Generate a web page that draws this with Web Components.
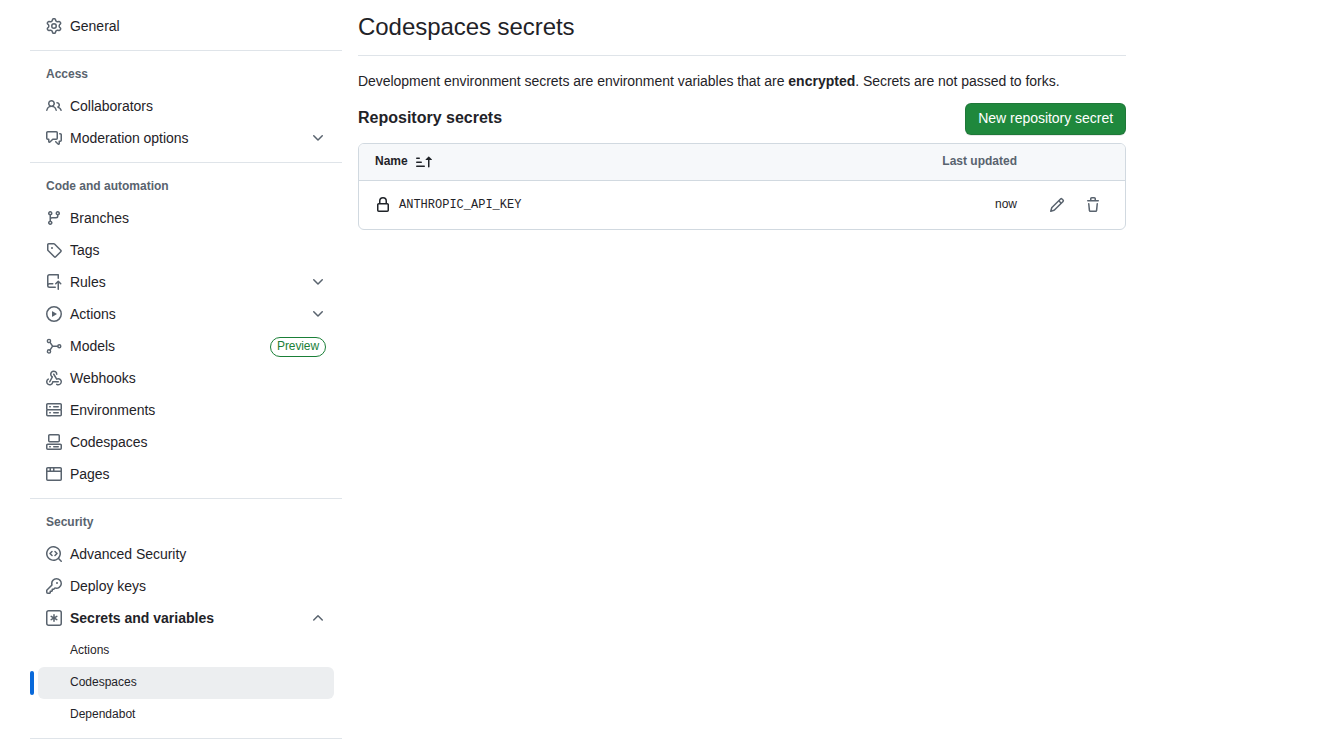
<!DOCTYPE html>
<html lang="en">
<head>
<meta charset="utf-8">
<title>Codespaces secrets</title>
<style>
  html, body { margin: 0; height: 750px; overflow: hidden; background: #fff; }
  body { font-family: "Liberation Sans", Arial, sans-serif; font-size: 14px; color: #1f2328; }
</style>
</head>
<body>
<settings-page>
  <settings-nav slot="nav">
    <nav-item icon="gear">General</nav-item>
    <nav-divider></nav-divider>
    <nav-heading>Access</nav-heading>
    <nav-item icon="people">Collaborators</nav-item>
    <nav-item icon="comment" chevron="down">Moderation options</nav-item>
    <nav-divider></nav-divider>
    <nav-heading>Code and automation</nav-heading>
    <nav-item icon="branch">Branches</nav-item>
    <nav-item icon="tag">Tags</nav-item>
    <nav-item icon="repopush" chevron="down">Rules</nav-item>
    <nav-item icon="play" chevron="down">Actions</nav-item>
    <nav-item icon="model" badge="Preview">Models</nav-item>
    <nav-item icon="webhook">Webhooks</nav-item>
    <nav-item icon="server">Environments</nav-item>
    <nav-item icon="codespaces">Codespaces</nav-item>
    <nav-item icon="browser">Pages</nav-item>
    <nav-divider></nav-divider>
    <nav-heading>Security</nav-heading>
    <nav-item icon="codescan">Advanced Security</nav-item>
    <nav-item icon="key">Deploy keys</nav-item>
    <nav-item icon="asterisk" chevron="up" strong>Secrets and variables</nav-item>
    <nav-item sub>Actions</nav-item>
    <nav-item sub current>Codespaces</nav-item>
    <nav-item sub>Dependabot</nav-item>
    <nav-divider></nav-divider>
  </settings-nav>
  <secrets-panel slot="main"></secrets-panel>
</settings-page>

<script>
const ICONS = {
  gear: 'M8 0a8.2 8.2 0 0 1 .701.031C9.444.095 9.99.645 10.16 1.29l.288 1.107c.018.066.079.158.212.224.231.114.454.243.668.386.123.082.233.09.299.071l1.103-.303c.644-.176 1.392.021 1.82.63.27.385.506.792.704 1.218.315.675.111 1.422-.364 1.891l-.814.806c-.049.048-.098.147-.088.294.016.257.016.515 0 .772-.01.147.038.246.088.294l.814.806c.475.469.679 1.216.364 1.891a7.977 7.977 0 0 1-.704 1.217c-.428.61-1.176.807-1.82.63l-1.102-.302c-.067-.019-.177-.011-.3.071a5.909 5.909 0 0 1-.668.386c-.133.066-.194.158-.211.224l-.29 1.106c-.168.646-.715 1.196-1.458 1.26a8.006 8.006 0 0 1-1.402 0c-.743-.064-1.289-.614-1.458-1.26l-.289-1.106c-.018-.066-.079-.158-.212-.224a5.738 5.738 0 0 1-.668-.386c-.123-.082-.233-.09-.299-.071l-1.103.303c-.644.176-1.392-.021-1.82-.63a8.12 8.12 0 0 1-.704-1.218c-.315-.675-.111-1.422.363-1.891l.815-.806c.05-.048.098-.147.088-.294a6.214 6.214 0 0 1 0-.772c.01-.147-.038-.246-.088-.294l-.815-.806C.635 6.045.431 5.298.746 4.623a7.92 7.92 0 0 1 .704-1.217c.428-.61 1.176-.807 1.82-.63l1.102.302c.067.019.177.011.3-.071.214-.143.437-.272.668-.386.133-.066.194-.158.211-.224l.29-1.106C6.009.645 6.556.095 7.299.03 7.53.01 7.764 0 8 0Zm-.571 1.525c-.036.003-.108.036-.137.146l-.289 1.105c-.147.561-.549.967-.998 1.189-.173.086-.34.183-.5.29-.417.278-.97.423-1.529.27l-1.103-.303c-.109-.03-.175.016-.195.045-.22.312-.412.644-.573.99-.014.031-.021.11.059.19l.815.806c.411.406.562.957.53 1.456a4.709 4.709 0 0 0 0 .582c.032.499-.119 1.05-.53 1.456l-.815.806c-.081.08-.073.159-.059.19.162.346.353.677.573.989.02.03.085.076.195.046l1.102-.303c.56-.153 1.113-.008 1.53.27.161.107.328.204.501.29.447.222.85.629.997 1.189l.289 1.105c.029.109.101.143.137.146a6.6 6.6 0 0 0 1.142 0c.036-.003.108-.036.137-.146l.289-1.105c.147-.561.549-.967.998-1.189.173-.086.34-.183.5-.29.417-.278.97-.423 1.529-.27l1.103.303c.109.029.175-.016.195-.045.22-.313.411-.644.573-.99.014-.031.021-.11-.059-.19l-.815-.806c-.411-.406-.562-.957-.53-1.456a4.709 4.709 0 0 0 0-.582c-.032-.499.119-1.05.53-1.456l.815-.806c.081-.08.073-.159.059-.19a6.464 6.464 0 0 0-.573-.989c-.02-.03-.085-.076-.195-.046l-1.102.303c-.56.153-1.113.008-1.53-.27a4.44 4.44 0 0 0-.501-.29c-.447-.222-.85-.629-.997-1.189l-.289-1.105c-.029-.11-.101-.143-.137-.146a6.6 6.6 0 0 0-1.142 0ZM11 8a3 3 0 1 1-6 0 3 3 0 0 1 6 0ZM9.5 8a1.5 1.5 0 1 0-3.001.001A1.5 1.5 0 0 0 9.5 8Z',
  people: 'M2 5.5a3.5 3.5 0 1 1 5.898 2.549 5.508 5.508 0 0 1 3.034 4.084.75.75 0 1 1-1.482.235 4 4 0 0 0-7.9 0 .75.75 0 0 1-1.482-.236A5.507 5.507 0 0 1 3.102 8.05 3.493 3.493 0 0 1 2 5.5ZM11 4a3.001 3.001 0 0 1 2.22 5.018 5.01 5.01 0 0 1 2.56 3.012.749.749 0 0 1-.885.954.752.752 0 0 1-.549-.514 3.507 3.507 0 0 0-2.522-2.372.75.75 0 0 1-.574-.73v-.352a.75.75 0 0 1 .416-.672A1.5 1.5 0 0 0 11 5.5.75.75 0 0 1 11 4Zm-5.5-.5a2 2 0 1 0-.001 3.999A2 2 0 0 0 5.5 3.5Z',
  comment: 'M1.75 1h8.5c.966 0 1.75.784 1.75 1.75v5.5A1.75 1.75 0 0 1 10.25 10H7.061l-2.574 2.573A1.458 1.458 0 0 1 2 11.543V10h-.25A1.75 1.75 0 0 1 0 8.25v-5.5C0 1.784.784 1 1.75 1ZM1.5 2.75v5.5c0 .138.112.25.25.25h1a.75.75 0 0 1 .75.75v2.19l2.72-2.72a.749.749 0 0 1 .53-.22h3.5a.25.25 0 0 0 .25-.25v-5.5a.25.25 0 0 0-.25-.25h-8.5a.25.25 0 0 0-.25.25Zm13 2a.25.25 0 0 0-.25-.25h-.5a.75.75 0 0 1 0-1.5h.5c.966 0 1.75.784 1.75 1.75v5.5A1.75 1.75 0 0 1 14.25 12H14v1.543a1.458 1.458 0 0 1-2.487 1.03L9.22 12.28a.749.749 0 0 1 .326-1.275.749.749 0 0 1 .734.215l2.22 2.22v-2.19a.75.75 0 0 1 .75-.75h1a.25.25 0 0 0 .25-.25Z',
  branch: 'M9.5 3.25a2.25 2.25 0 1 1 3 2.122V6A2.5 2.5 0 0 1 10 8.5H6a1 1 0 0 0-1 1v1.128a2.251 2.251 0 1 1-1.5 0V5.372a2.25 2.25 0 1 1 1.5 0v1.836A2.493 2.493 0 0 1 6 7h4a1 1 0 0 0 1-1v-.628A2.25 2.25 0 0 1 9.5 3.25Zm-6 0a.75.75 0 1 0 1.5 0 .75.75 0 0 0-1.5 0Zm8.25-.75a.75.75 0 1 0 0 1.5.75.75 0 0 0 0-1.5ZM4.25 12a.75.75 0 1 0 0 1.5.75.75 0 0 0 0-1.5Z',
  tag: 'M1 7.775V2.75C1 1.784 1.784 1 2.75 1h5.025c.464 0 .91.184 1.238.513l6.25 6.25a1.75 1.75 0 0 1 0 2.474l-5.026 5.026a1.75 1.75 0 0 1-2.474 0l-6.25-6.25A1.752 1.752 0 0 1 1 7.775Zm1.5 0c0 .066.026.13.073.177l6.25 6.25a.25.25 0 0 0 .354 0l5.025-5.025a.25.25 0 0 0 0-.354l-6.25-6.25a.25.25 0 0 0-.177-.073H2.75a.25.25 0 0 0-.25.25ZM6 5a1 1 0 1 1 0 2 1 1 0 0 1 0-2Z',
  repopush: 'M1 2.5A2.5 2.5 0 0 1 3.5 0h8.75a.75.75 0 0 1 .75.75v3.5a.75.75 0 0 1-1.5 0V1.5h-8a1 1 0 0 0-1 1v6.708A2.493 2.493 0 0 1 3.5 9h3.25a.75.75 0 0 1 0 1.5H3.5a1 1 0 0 0 0 2h5.75a.75.75 0 0 1 0 1.5H3.5A2.5 2.5 0 0 1 1 11.5Zm13.23 7.79h-.001l-1.224-1.224v6.184a.75.75 0 0 1-1.5 0V9.066L10.28 10.29a.75.75 0 0 1-1.06-1.061l2.505-2.504a.75.75 0 0 1 1.06 0L15.29 9.23a.751.751 0 0 1-.018 1.042.751.751 0 0 1-1.042.018Z',
  play: 'M8 0a8 8 0 1 1 0 16A8 8 0 0 1 8 0ZM1.5 8a6.5 6.5 0 1 0 13 0 6.5 6.5 0 0 0-13 0Zm4.879-2.773 4.264 2.559a.25.25 0 0 1 0 .428l-4.264 2.559A.25.25 0 0 1 6 10.559V5.442a.25.25 0 0 1 .379-.215Z',
  webhook: 'M5.5 4.25a2.25 2.25 0 0 1 4.5 0 .75.75 0 0 0 1.5 0 3.75 3.75 0 1 0-6.14 2.889l-2.272 4.258a.75.75 0 0 0 1.324.706L7 7.25a.75.75 0 0 0-.309-1.015A2.25 2.25 0 0 1 5.5 4.25ZM7.364 3.607a.75.75 0 0 1 1.03.257l2.608 4.349a3.75 3.75 0 1 1-.628 6.785.75.75 0 0 1 .752-1.299 2.25 2.25 0 1 0-.033-3.88.75.75 0 0 1-1.03-.256L7.107 4.636a.75.75 0 0 1 .257-1.03ZM2.9 8.776A.75.75 0 0 1 2.625 9.8 2.25 2.25 0 1 0 6 11.75a.75.75 0 0 1 .75-.751h5.5a.75.75 0 0 1 0 1.5H7.425a3.751 3.751 0 1 1-5.55-3.998.75.75 0 0 1 1.024.274Z',
  server: 'M1.75 1h12.5c.966 0 1.75.784 1.75 1.75v4c0 .372-.116.717-.314 1 .198.283.314.628.314 1v4a1.75 1.75 0 0 1-1.75 1.75H1.75A1.75 1.75 0 0 1 0 12.75v-4c0-.358.109-.707.314-1a1.739 1.739 0 0 1-.314-1v-4C0 1.784.784 1 1.75 1ZM1.5 2.75v4c0 .138.112.25.25.25h12.5a.25.25 0 0 0 .25-.25v-4a.25.25 0 0 0-.25-.25H1.75a.25.25 0 0 0-.25.25Zm.25 5.75a.25.25 0 0 0-.25.25v4c0 .138.112.25.25.25h12.5a.25.25 0 0 0 .25-.25v-4a.25.25 0 0 0-.25-.25ZM7 4.75A.75.75 0 0 1 7.75 4h4.5a.75.75 0 0 1 0 1.5h-4.5A.75.75 0 0 1 7 4.75ZM7.75 10h4.5a.75.75 0 0 1 0 1.5h-4.5a.75.75 0 0 1 0-1.5ZM3 4.75A.75.75 0 0 1 3.75 4h.5a.75.75 0 0 1 0 1.5h-.5A.75.75 0 0 1 3 4.75ZM3.75 10h.5a.75.75 0 0 1 0 1.5h-.5a.75.75 0 0 1 0-1.5Z',
  codespaces: 'M0 11.25c0-.966.784-1.75 1.75-1.75h12.5c.966 0 1.75.784 1.75 1.75v3A1.75 1.75 0 0 1 14.25 16H1.75A1.75 1.75 0 0 1 0 14.25Zm2-9.5C2 .784 2.784 0 3.75 0h8.5C13.216 0 14 .784 14 1.75v5a1.75 1.75 0 0 1-1.75 1.75h-8.5A1.75 1.75 0 0 1 2 6.75Zm1.75-.25a.25.25 0 0 0-.25.25v5c0 .138.112.25.25.25h8.5a.25.25 0 0 0 .25-.25v-5a.25.25 0 0 0-.25-.25Zm-2 9.5a.25.25 0 0 0-.25.25v3c0 .138.112.25.25.25h12.5a.25.25 0 0 0 .25-.25v-3a.25.25 0 0 0-.25-.25ZM7 12.75a.75.75 0 0 1 .75-.75h4.5a.75.75 0 0 1 0 1.5h-4.5a.75.75 0 0 1-.75-.75Zm-4 0a.75.75 0 0 1 .75-.75h.5a.75.75 0 0 1 0 1.5h-.5a.75.75 0 0 1-.75-.75Z',
  browser: 'M0 2.75C0 1.784.784 1 1.75 1h12.5c.966 0 1.75.784 1.75 1.75v10.5A1.75 1.75 0 0 1 14.25 15H1.75A1.75 1.75 0 0 1 0 13.25ZM14.5 6h-13v7.25c0 .138.112.25.25.25h12.5a.25.25 0 0 0 .25-.25Zm-6-3.5v2h6v-1.75a.25.25 0 0 0-.25-.25ZM5 2.5v2h2v-2Zm-3.25 0a.25.25 0 0 0-.25.25V4.5h2v-2Z',
  codescan: 'M8.47 4.97a.75.75 0 0 0 0 1.06L9.94 7.5 8.47 8.97a.75.75 0 1 0 1.06 1.06l2-2a.75.75 0 0 0 0-1.06l-2-2a.75.75 0 0 0-1.06 0ZM6.53 6.03a.75.75 0 0 0-1.06-1.06l-2 2a.75.75 0 0 0 0 1.06l2 2a.75.75 0 1 0 1.06-1.06L5.06 7.5l1.47-1.47ZM12.246 13.307a7.501 7.501 0 1 1 1.06-1.06l2.474 2.473a.749.749 0 0 1-.326 1.275.749.749 0 0 1-.734-.215ZM1.5 7.5a6.002 6.002 0 0 0 3.608 5.504 6.002 6.002 0 0 0 6.486-1.117.748.748 0 0 1 .292-.293A6 6 0 1 0 1.5 7.5Z',
  key: 'M10.5 0a5.499 5.499 0 1 1-1.288 10.848l-.932.932a.749.749 0 0 1-.53.22H7v.75a.749.749 0 0 1-.22.53l-.5.5a.749.749 0 0 1-.53.22H5v.75a.749.749 0 0 1-.22.53l-.5.5a.749.749 0 0 1-.53.22h-2A1.75 1.75 0 0 1 0 14.25v-2c0-.199.079-.389.22-.53l4.932-4.932A5.5 5.5 0 0 1 10.5 0Zm-4 5.5c-.001.431.069.86.205 1.269a.75.75 0 0 1-.181.768L1.5 12.56v1.69c0 .138.112.25.25.25h1.69l.06-.06v-1.19a.75.75 0 0 1 .75-.75h1.19l.06-.06v-1.19a.75.75 0 0 1 .75-.75h1.19l1.023-1.025a.75.75 0 0 1 .768-.18A4 4 0 1 0 6.5 5.5ZM11 6a1 1 0 1 1 0-2 1 1 0 0 1 0 2Z',
  asterisk: 'M0 2.75A2.75 2.75 0 0 1 2.75 0h10.5A2.75 2.75 0 0 1 16 2.75v10.5A2.75 2.75 0 0 1 13.25 16H2.75A2.75 2.75 0 0 1 0 13.25ZM2.75 1.5c-.69 0-1.25.56-1.25 1.25v10.5c0 .69.56 1.25 1.25 1.25h10.5c.69 0 1.25-.56 1.25-1.25V2.75c0-.69-.56-1.25-1.25-1.25ZM8 4a.75.75 0 0 1 .75.75V6.7l1.69-.975a.75.75 0 0 1 .75 1.3L9.5 8l1.69.976a.75.75 0 0 1-.75 1.298L8.75 9.3v1.951a.75.75 0 0 1-1.5 0V9.299l-1.69.976a.75.75 0 0 1-.75-1.3L6.5 8l-1.69-.975a.75.75 0 0 1 .75-1.3l1.69.976V4.75A.75.75 0 0 1 8 4Z',
  down: 'M12.78 5.22a.749.749 0 0 1 0 1.06l-4.25 4.25a.749.749 0 0 1-1.06 0L3.22 6.28a.749.749 0 1 1 1.06-1.06L8 8.939l3.72-3.719a.749.749 0 0 1 1.06 0Z',
  up: 'M3.22 10.53a.749.749 0 0 1 0-1.06l4.25-4.25a.749.749 0 0 1 1.06 0l4.25 4.25a.749.749 0 1 1-1.06 1.06L8 6.811 4.28 10.53a.749.749 0 0 1-1.06 0Z',
  lock: 'M4 4a4 4 0 0 1 8 0v2h.25c.966 0 1.75.784 1.75 1.75v5.5A1.75 1.75 0 0 1 12.25 15h-8.5A1.75 1.75 0 0 1 2 13.25v-5.5C2 6.784 2.784 6 3.75 6H4Zm8.25 3.5h-8.5a.25.25 0 0 0-.25.25v5.5c0 .138.112.25.25.25h8.5a.25.25 0 0 0 .25-.25v-5.5a.25.25 0 0 0-.25-.25ZM10.5 6V4a2.5 2.5 0 1 0-5 0v2Z',
  pencil: 'M11.013 1.427a1.75 1.75 0 0 1 2.474 0l1.086 1.086a1.75 1.75 0 0 1 0 2.474l-8.61 8.61c-.21.21-.47.364-.756.445l-3.251.93a.75.75 0 0 1-.927-.928l.929-3.25c.081-.286.235-.547.445-.758l8.61-8.61Zm.176 4.823L9.75 4.81l-6.286 6.287a.253.253 0 0 0-.064.108l-.558 1.953 1.953-.558a.253.253 0 0 0 .108-.064Zm1.238-3.763a.25.25 0 0 0-.354 0L10.811 3.75l1.439 1.44 1.263-1.263a.25.25 0 0 0 0-.354Z',
  trash: 'M11 1.75V3h2.25a.75.75 0 0 1 0 1.5H2.75a.75.75 0 0 1 0-1.5H5V1.75C5 .784 5.784 0 6.75 0h2.5C10.216 0 11 .784 11 1.75ZM4.496 6.675l.66 6.6a.25.25 0 0 0 .249.225h5.19a.25.25 0 0 0 .249-.225l.66-6.6a.75.75 0 0 1 1.492.149l-.66 6.6A1.748 1.748 0 0 1 10.595 15h-5.19a1.75 1.75 0 0 1-1.741-1.575l-.66-6.6a.75.75 0 1 1 1.492-.15ZM6.5 1.75V3h3V1.75a.25.25 0 0 0-.25-.25h-2.5a.25.25 0 0 0-.25.25Z',
  sortasc: 'm12.927 2.573 3 3A.25.25 0 0 1 15.75 6H13.5v6.75a.75.75 0 0 1-1.5 0V6H9.75a.25.25 0 0 1-.177-.427l3-3a.25.25 0 0 1 .354 0ZM0 12.25a.75.75 0 0 1 .75-.75h7.5a.75.75 0 0 1 0 1.5H.75a.75.75 0 0 1-.75-.75Zm0-4a.75.75 0 0 1 .75-.75h4.5a.75.75 0 0 1 0 1.5H.75A.75.75 0 0 1 0 8.25Zm0-4a.75.75 0 0 1 .75-.75h2.5a.75.75 0 0 1 0 1.5H.75A.75.75 0 0 1 0 4.25Z'
};
const MODEL = '<circle cx="3" cy="3" r="1.6" fill="none" stroke="currentColor" stroke-width="1.4"/><circle cx="3" cy="13.4" r="1.6" fill="none" stroke="currentColor" stroke-width="1.4"/><circle cx="13.3" cy="8.2" r="1.5" fill="none" stroke="currentColor" stroke-width="1.4"/><path d="M4 4.3 6.6 8.2 4 12.1M6.6 8.2h5.2" fill="none" stroke="currentColor" stroke-width="1.5" stroke-linecap="round" stroke-linejoin="round"/>';

class GhIcon extends HTMLElement {
  connectedCallback() {
    if (this.shadowRoot) return;
    const n = this.getAttribute('name');
    const inner = n === 'model' ? MODEL : `<path fill="currentColor" d="${ICONS[n] || ''}"/>`;
    this.attachShadow({ mode: 'open' }).innerHTML =
      `<style>:host{display:inline-flex;width:16px;height:16px;flex:none}svg{display:block}</style>
       <svg width="16" height="16" viewBox="0 0 16 16" aria-hidden="true">${inner}</svg>`;
  }
}
customElements.define('gh-icon', GhIcon);

class SettingsPage extends HTMLElement {
  constructor() {
    super();
    this.attachShadow({ mode: 'open' }).innerHTML = `<style>
      :host{display:grid;grid-template-columns:312px 768px;column-gap:16px;padding-left:30px;padding-top:10px;box-sizing:border-box;height:750px;overflow:hidden}
      .main{margin-top:-10px}
    </style><slot name="nav"></slot><div class="main"><slot name="main"></slot></div>`;
  }
}
customElements.define('settings-page', SettingsPage);

class SettingsNav extends HTMLElement {
  constructor() {
    super();
    this.attachShadow({ mode: 'open' }).innerHTML =
      `<style>:host{display:flex;flex-direction:column}</style><slot></slot>`;
  }
}
customElements.define('settings-nav', SettingsNav);

class NavDivider extends HTMLElement {
  constructor() {
    super();
    this.attachShadow({ mode: 'open' }).innerHTML =
      `<style>:host{display:block;height:1px;background:#d1d9e0b3;margin:8px 0}</style>`;
  }
}
customElements.define('nav-divider', NavDivider);

class NavHeading extends HTMLElement {
  constructor() {
    super();
    this.attachShadow({ mode: 'open' }).innerHTML =
      `<style>:host{display:block;font-size:12px;font-weight:700;line-height:18px;color:#59636e;padding:6px 16px 7px}</style><slot></slot>`;
  }
}
customElements.define('nav-heading', NavHeading);

class NavItem extends HTMLElement {
  connectedCallback() {
    if (this.shadowRoot) return;
    const icon = this.getAttribute('icon');
    const chev = this.getAttribute('chevron');
    const badge = this.getAttribute('badge');
    this.attachShadow({ mode: 'open' }).innerHTML = `<style>
      :host{display:block;height:32px;font-size:14px;position:relative;color:#1f2328}
      .row{display:flex;align-items:center;gap:8px;height:32px;margin:0 8px;padding:0 8px;border-radius:6px;box-sizing:border-box}
      .ic{color:#59636e;display:flex}
      .lb{flex:1;line-height:20px;margin-top:-1px;letter-spacing:-.03px}
      :host([strong]) .lb{font-weight:700;letter-spacing:0}
      :host([sub]) .lb{letter-spacing:0;margin-top:-3px}
      :host([sub]) .row{padding-left:32px;font-size:12px;position:relative;top:1px}
      :host([current]) .row{background:#eceef0}
      :host([current])::before{content:"";position:absolute;left:0;top:5px;width:4px;height:24px;border-radius:6px;background:#0969da}
      .badge{font-size:12px;letter-spacing:-.1px;line-height:16px;height:18px;padding:0 6px;border:1px solid #1a7f37;color:#1a7f37;border-radius:10px;position:relative;top:1px}
    </style><div class="row">
      ${icon ? `<span class="ic"><gh-icon name="${icon}"></gh-icon></span>` : ''}
      <span class="lb"><slot></slot></span>
      ${badge ? `<span class="badge">${badge}</span>` : ''}
      ${chev ? `<span class="ic"><gh-icon name="${chev}"></gh-icon></span>` : ''}
    </div>`;
  }
}
customElements.define('nav-item', NavItem);

class GhButton extends HTMLElement {
  constructor() {
    super();
    this.attachShadow({ mode: 'open' }).innerHTML = `<style>
      :host{display:inline-flex;align-items:center;height:32px;box-sizing:border-box;padding:0 12px 2px;font-size:14px;line-height:20px;letter-spacing:-.03px;color:#fff;background:#1f883d;border:1px solid rgba(31,35,40,.15);border-radius:6px;box-shadow:0 1px 0 rgba(31,35,40,.1);white-space:nowrap}
    </style><slot></slot>`;
  }
}
customElements.define('gh-button', GhButton);

class SecretsPanel extends HTMLElement {
  constructor() {
    super();
    this.attachShadow({ mode: 'open' }).innerHTML = `<style>
      :host{display:block}
      h2{margin:0;font-size:24px;font-weight:400;letter-spacing:-.05px;line-height:36px;padding:9px 0 10px;border-bottom:1px solid #d1d9e0b3;color:#1f2328}
      p{margin:15px 0 0;font-size:14px;line-height:21px;letter-spacing:-.035px}
      p b{letter-spacing:0}
      .head{display:flex;justify-content:space-between;align-items:center;margin-top:11px;height:32px}
      h3{margin:0;font-size:16px;font-weight:700;line-height:24px;position:relative;top:-1px}
      .table{margin-top:8px;border:1px solid #d1d9e0;border-radius:6px;overflow:hidden}
      .thead{display:flex;align-items:center;height:36px;background:#f6f8fa;border-bottom:1px solid #d1d9e0;font-size:12px;font-weight:700;padding:0 16px}
      .thead>span{position:relative;top:-1px}
      .name{flex:1;display:flex;align-items:center;gap:8px}
      .thead .name gh-icon{position:relative;top:1px}
      .upd{color:#59636e;margin-right:92px}
      .row{display:flex;align-items:center;height:48px;padding:0 16px}
      .key{font-family:"Liberation Mono",monospace;font-size:12px;line-height:18px}
      .now{font-size:12px;margin-right:32px;position:relative;top:-1px}
      .act{color:#59636e;display:flex;gap:20px;margin-right:8px}
      .lock{color:#1f2328;display:flex}
    </style>
    <h2>Codespaces secrets</h2>
    <p>Development environment secrets are environment variables that are <b>encrypted</b>. Secrets are not passed to forks.</p>
    <div class="head"><h3>Repository secrets</h3><gh-button>New repository secret</gh-button></div>
    <div class="table">
      <div class="thead"><span class="name">Name <gh-icon name="sortasc"></gh-icon></span><span class="upd">Last updated</span></div>
      <div class="row">
        <span class="name"><span class="lock"><gh-icon name="lock"></gh-icon></span><span class="key">ANTHROPIC_API_KEY</span></span>
        <span class="now">now</span>
        <span class="act"><gh-icon name="pencil"></gh-icon><gh-icon name="trash"></gh-icon></span>
      </div>
    </div>`;
  }
}
customElements.define('secrets-panel', SecretsPanel);
</script>
</body>
</html>
